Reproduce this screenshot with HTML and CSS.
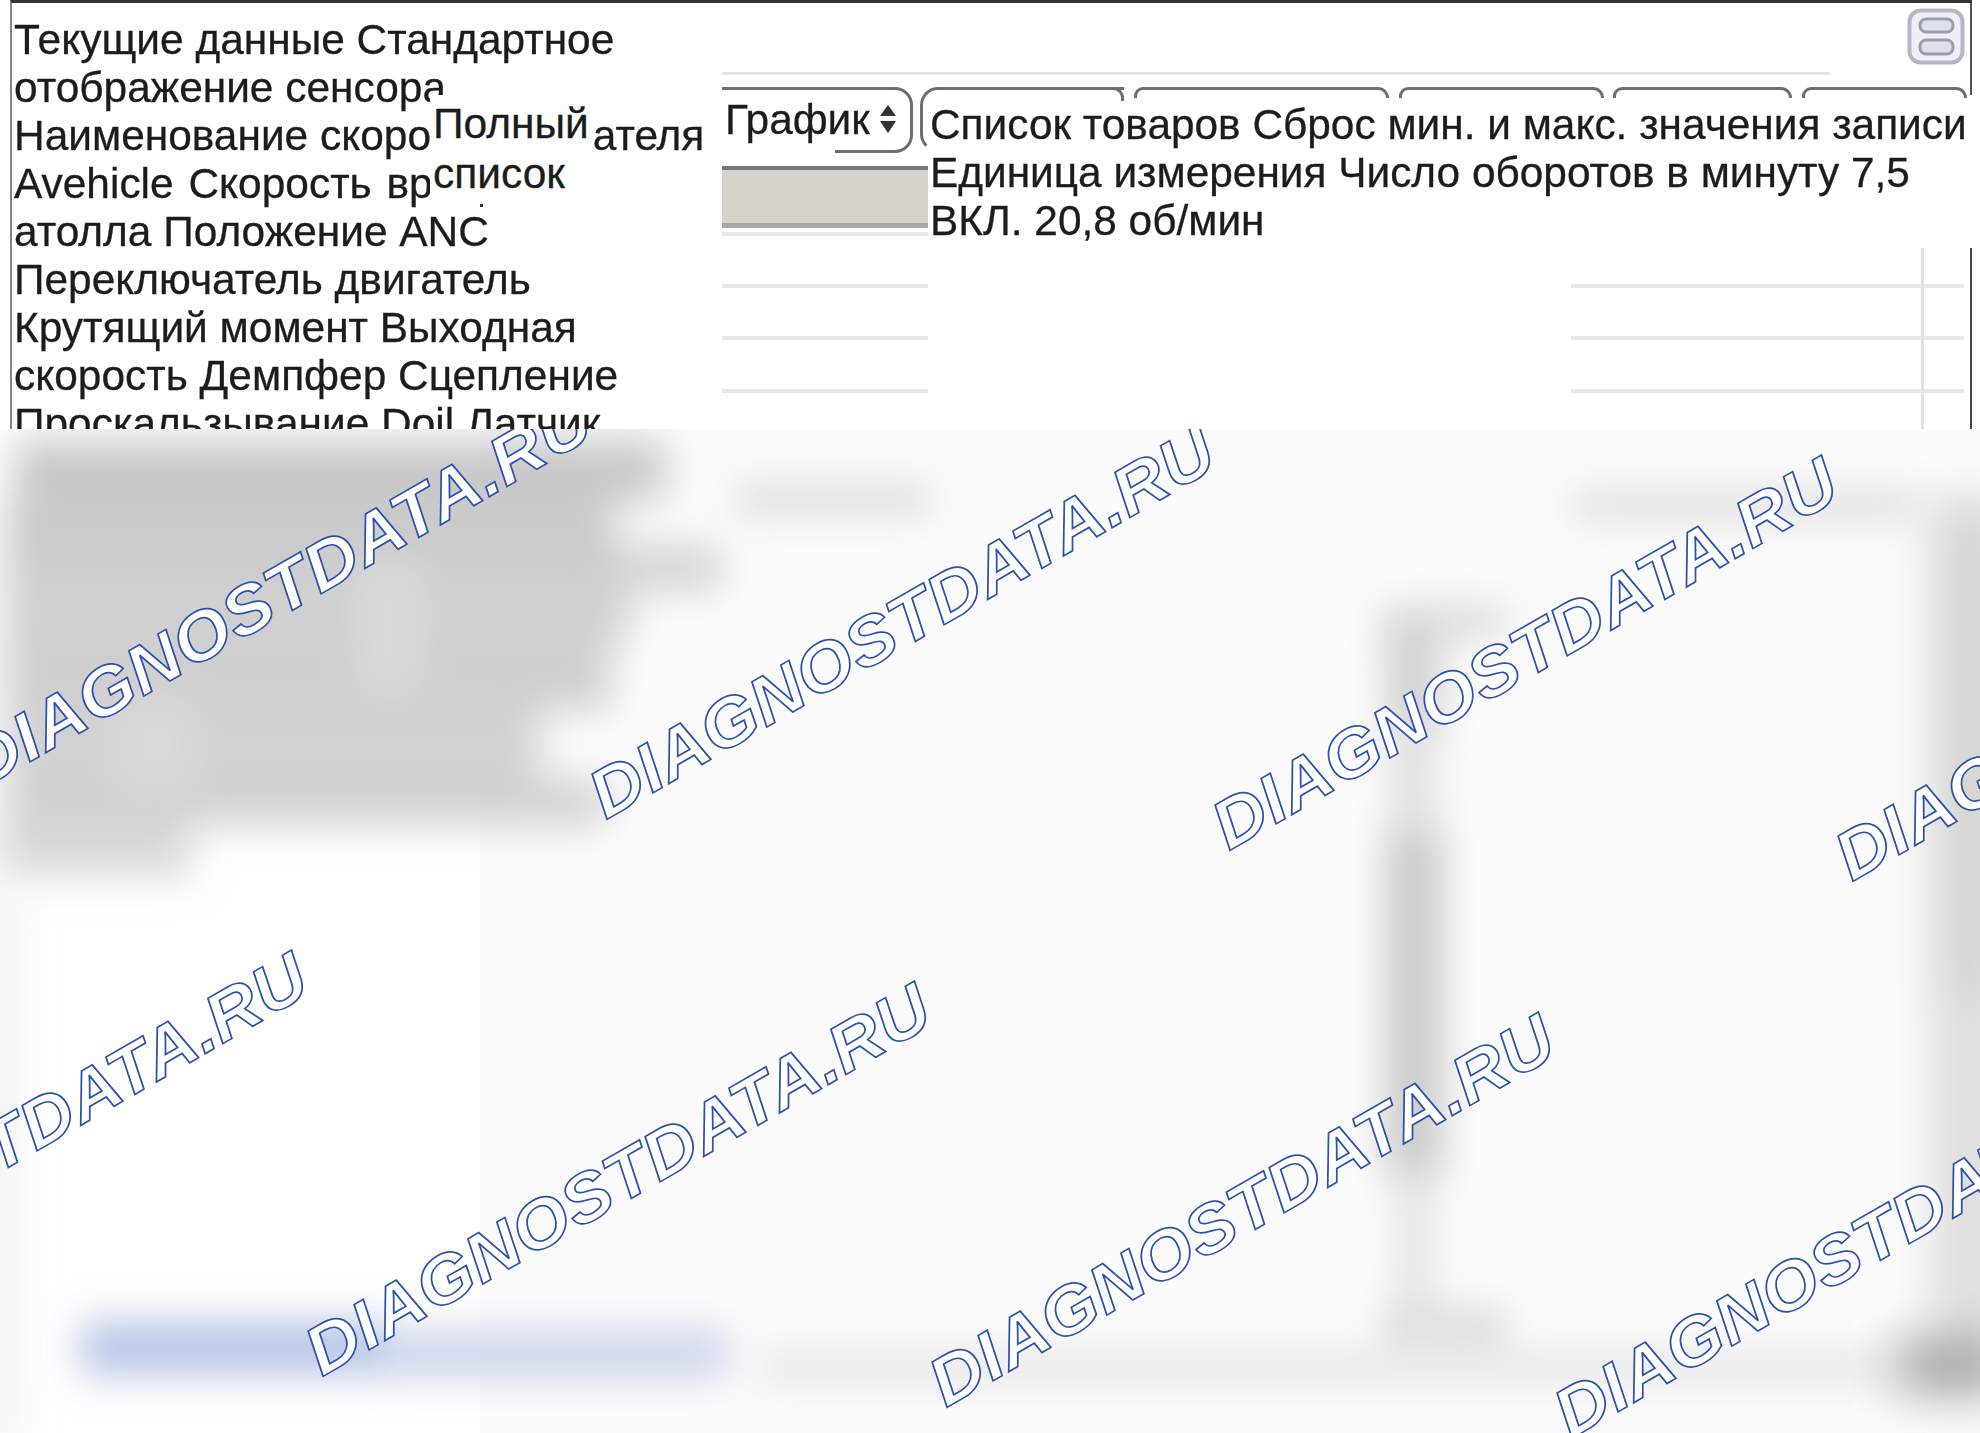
FILE: index.html
```html
<!DOCTYPE html>
<html lang="ru">
<head>
<meta charset="utf-8">
<title>Текущие данные</title>
<link rel="stylesheet" href="styles.css">
</head>
<body>
<section class="frame">
  <div class="sensors">
    <span class="line">Текущие данные Стандартное</span>
    <span class="line">отображение сенсора</span>
    <span class="line">Наименование скорости двигателя</span>
    <span class="line line-wide">Avehicle Скорость вращения</span>
    <span class="line">атолла Положение ANC</span>
    <span class="line">Переключатель двигатель</span>
    <span class="line">Крутящий момент Выходная</span>
    <span class="line">скорость Демпфер Сцепление</span>
    <span class="line">Проскальзывание Doil Латчик</span>
  </div>
  <div class="tooltip">Полный<br>список<i class="tooltip-dot"></i></div>
  <div class="workspace">
    <div class="toolbar">
      <svg class="layout-icon" viewBox="0 0 58 57" aria-hidden="true">
        <rect x="2.5" y="2.5" width="53" height="52" rx="11" fill="#eef0f6" stroke="#b3b7c6" stroke-width="4"/>
        <rect x="13" y="11" width="33" height="13" rx="6" fill="#dfe1e9" stroke="#9a9eaf" stroke-width="3"/>
        <rect x="13" y="32" width="33" height="14" rx="6" fill="#dfe1e9" stroke="#9a9eaf" stroke-width="3"/>
      </svg>
    </div>
    <div class="hairline"></div>
    <div class="stage">
      <div class="tabs">
        <div class="tab tab-graph">
          <span>График</span>
          <svg class="sort-icon" viewBox="0 0 16 28" aria-hidden="true">
            <path d="M8 0 16 11H0Z" fill="#333"/>
            <path d="M0 16H16L8 28Z" fill="#333"/>
          </svg>
        </div>
        <div class="tab tab-list"></div>
        <div class="tab tab-a"></div>
        <div class="tab tab-b"></div>
        <div class="tab tab-c"></div>
        <div class="tab tab-d"></div>
      </div>
      <div class="readout">
        <span class="line">Список товаров Сброс мин. и макс. значения записи</span>
        <span class="line">Единица измерения Число оборотов в минуту 7,5</span>
        <span class="line">ВКЛ. 20,8 об/мин</span>
      </div>
      <div class="rows">
        <div class="cell selected"></div><div class="cell-gap"></div><div class="cell-empty"></div>
        <div class="cell rule"></div><div class="cell-gap"></div><div class="cell rule"></div>
        <div class="cell rule"></div><div class="cell-gap"></div><div class="cell rule"></div>
        <div class="cell rule"></div><div class="cell-gap"></div><div class="cell rule"></div>
      </div>
      <div class="scroll-rules"></div>
    </div>
  </div>
</section>
<section class="obscured">
  <svg class="obscured-art" viewBox="0 429 1980 1004" role="img" aria-label="DIAGNOSTDATA.RU">
    <defs>
      <filter id="soft" x="-20%" y="-20%" width="140%" height="140%"><feGaussianBlur stdDeviation="19"/></filter>
      <filter id="softer" x="-50%" y="-30%" width="200%" height="160%"><feGaussianBlur stdDeviation="24"/></filter>
    </defs>
    <rect class="page-white" x="0" y="429" width="480" height="1004"/>
    <g filter="url(#soft)">
      <rect x="15" y="440" width="650" height="60" fill="#c8c8c8"/>
      <rect x="5" y="500" width="610" height="70" fill="#cbcbcb"/>
      <rect x="5" y="570" width="625" height="70" fill="#d0d0d0"/>
      <rect x="5" y="640" width="605" height="70" fill="#cfcfcf"/>
      <rect x="5" y="710" width="535" height="70" fill="#d2d2d2"/>
      <rect x="5" y="780" width="600" height="45" fill="#d0d0d0"/>
      <rect x="0" y="825" width="190" height="50" fill="#d8d8d8"/>
      <rect x="360" y="560" width="60" height="130" fill="#dadada"/>
      <rect x="120" y="700" width="70" height="90" fill="#dadada"/>
      <rect x="612" y="546" width="108" height="44" fill="#d2d2d2"/>
      <rect x="735" y="482" width="195" height="34" fill="#e0e0e0"/>
      <rect x="1571" y="490" width="350" height="30" fill="#e0e0e0"/>
      <rect x="1382" y="606" width="125" height="30" fill="#dadada"/>
      <rect x="1386" y="620" width="54" height="110" fill="#d0d0d0"/>
      <rect x="1386" y="830" width="56" height="345" fill="#c9c9c9"/>
      <rect x="1390" y="730" width="46" height="100" fill="#e2e2e2"/>
      <rect x="1395" y="1175" width="40" height="135" fill="#e6e6e6"/>
      <rect x="1382" y="1310" width="125" height="30" fill="#d8d8d8"/>
      <rect x="82" y="1322" width="300" height="52" fill="#b6c3e4"/>
      <rect x="382" y="1330" width="344" height="48" fill="#cdd5ea"/>
      <rect x="757" y="1350" width="1223" height="34" fill="#e8e8e8"/>
    </g>
    <g filter="url(#softer)">
      <rect x="1935" y="500" width="70" height="500" fill="#d2d2ce"/>
      <rect x="1935" y="1000" width="70" height="340" fill="#dcdcda"/>
      <rect x="1900" y="1335" width="110" height="60" fill="#acaca8"/>
      <rect x="-25" y="880" width="35" height="560" fill="#eeeeee"/>
    </g>
    <g class="watermarks">
      <text transform="translate(-17 789) rotate(-30) scale(1.07 1)">DIAGNOSTDATA.RU</text>
      <text transform="translate(606 820) rotate(-30) scale(1.07 1)">DIAGNOSTDATA.RU</text>
      <text transform="translate(1229 851) rotate(-30) scale(1.07 1)">DIAGNOSTDATA.RU</text>
      <text transform="translate(1852 882) rotate(-30) scale(1.07 1)">DIAGNOSTDATA.RU</text>
      <text transform="translate(-301 1346) rotate(-30) scale(1.07 1)">DIAGNOSTDATA.RU</text>
      <text transform="translate(322 1377) rotate(-30) scale(1.07 1)">DIAGNOSTDATA.RU</text>
      <text transform="translate(946 1408) rotate(-30) scale(1.07 1)">DIAGNOSTDATA.RU</text>
      <text transform="translate(1571 1439) rotate(-30) scale(1.07 1)">DIAGNOSTDATA.RU</text>
    </g>
  </svg>
</section>
</body>
</html>
```
FILE: styles.css
```css
* { box-sizing: border-box; }
html, body { margin: 0; padding: 0; background: #fff; }
body {
  width: 1980px;
  height: 1433px;
  overflow: hidden;
  font-family: "Liberation Sans", Arial, sans-serif;
  color: #1c1c1c;
}
.line { display: block; white-space: nowrap; }
.line-wide { word-spacing: 3px; }

.frame {
  position: relative;
  display: grid;
  grid-template-columns: 710px 1fr;
  height: 429px;
  margin: 0 8px 0 10px;
  border-top: 3px solid #333;
  border-left: 2px solid #858585;
  overflow: hidden;
  filter: blur(0.6px);
  -webkit-text-stroke: 0.3px #1c1c1c;
}
.frame::after {
  content: "";
  position: absolute;
  top: 0;
  right: 0;
  width: 2px;
  height: 92px;
  background: #555;
}
.sensors {
  padding: 13px 0 0 2px;
  font-size: 42.45px;
  line-height: 48px;
}
.tooltip {
  position: absolute;
  left: 418px;
  top: 92px;
  width: 163px;
  height: 117px;
  padding: 4px 0 0 3px;
  background: #fff;
  font-size: 42.5px;
  line-height: 50px;
}
.tooltip-dot {
  position: absolute;
  left: 50px;
  bottom: 5px;
  width: 3px;
  height: 3px;
  background: #333;
}

.workspace { min-width: 0; }
.toolbar {
  display: flex;
  justify-content: flex-end;
  height: 69px;
  padding: 5px 7px 0 0;
}
.layout-icon { display: block; width: 58px; height: 57px; }
.hairline { width: 1108px; height: 3px; background: #e4e4e4; }

.stage { display: grid; height: 354px; margin-top: 12px; }
.stage > * { grid-area: 1 / 1; }

.tabs { display: flex; align-self: start; height: 66px; }
.tab {
  flex: none;
  position: relative;
  height: 11px;
  border: 3px solid #6e6e6e;
  border-bottom: 0;
  border-radius: 9px 11px 0 0;
}
.tab-graph {
  display: flex;
  align-items: flex-start;
  width: 191px;
  height: 66px;
  margin-right: 7px;
  padding: 7px 0 0 3px;
  border-left: 0;
  border-bottom: 3px solid #6e6e6e;
  border-radius: 0 18px 18px 0;
  font-size: 42.4px;
  line-height: 46px;
}
.tab-graph::before {
  content: "";
  position: absolute;
  left: 0;
  bottom: -3px;
  width: 113px;
  height: 3px;
  background: #fff;
}
.tab-graph span { flex: none; width: 152px; }
.sort-icon { flex: none; width: 16px; height: 28px; margin: 8px 0 0 3px; }
.tab-list {
  width: 204px;
  height: 65px;
  margin-right: 10px;
  border-right: 0;
  border-bottom: 3px solid transparent;
  border-radius: 18px 0 0 18px;
}
.tab-list::after {
  content: "";
  position: absolute;
  top: -3px;
  right: 0;
  width: 12px;
  height: 11px;
  border: 3px solid #6e6e6e;
  border-width: 3px 3px 0 0;
  border-radius: 0 11px 0 0;
}
.tab-a { width: 255px; margin-right: 10px; }
.tab-b { width: 205px; margin-right: 9px; }
.tab-c { width: 179px; margin-right: 10px; }
.tab-d { width: 165px; }

.readout {
  margin: 14px 0 0 208px;
  font-size: 42.4px;
  line-height: 48px;
  align-self: start;
}

.rows {
  display: grid;
  grid-template-columns: 206px 643px 393px;
  grid-template-rows: 72px 50px 52px 53px;
  align-self: start;
  margin-top: 79px;
}
.selected {
  height: 70px;
  background: linear-gradient(#777 0 4px, #d6d4ca 4px 57px, #a9a9a2 57px 62px, #fff 62px 66px, #e8e8e8 66px 70px);
}
.rule { border-bottom: 4px solid #e6e6e6; }

.scroll-rules {
  align-self: stretch;
  width: 51px;
  margin: 161px 0 0 1199px;
  border-left: 3px solid #e2e2e2;
  border-right: 2px solid #444;
}

.obscured { height: 1004px; overflow: hidden; background: #fbfbfb; }
.obscured-art { display: block; width: 1980px; height: 1004px; }
.page-white { fill: #fefefe; }
.watermarks text {
  font-family: "Liberation Sans", Arial, sans-serif;
  font-weight: 700;
  font-style: italic;
  font-size: 68px;
  letter-spacing: 0.6px;
  fill: #fff;
  stroke: #2b50ad;
  stroke-width: 1.7px;
  vector-effect: non-scaling-stroke;
}
```
